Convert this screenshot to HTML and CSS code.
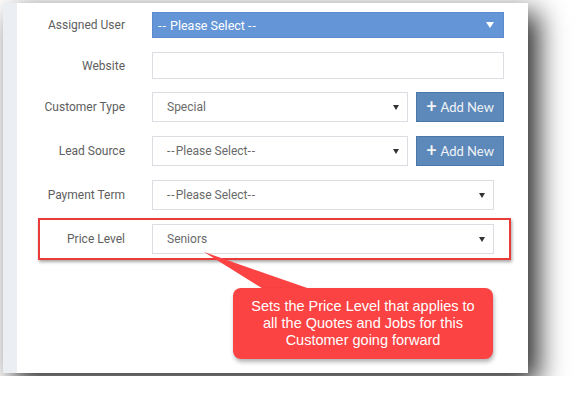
FILE: index.html
```html
<!DOCTYPE html>
<html>
<head>
<meta name="viewport" content="width=device-width, initial-scale=1">
<link rel="stylesheet" href="styles.css">
</head>
<body>

<div class="shot">
  <div class="strip"></div>

  <div class="form">
    <div class="row row-first">
      <span class="lbl">Assigned User</span>
      <div class="sel sel-blue wide"><span class="dash">--</span>&nbsp;Please Select&nbsp;<span class="dash">--</span><span class="caret caret-white"></span></div>
    </div>

    <div class="row row-web">
      <span class="lbl">Website</span>
      <div class="txt wide"></div>
    </div>

    <div class="row">
      <span class="lbl">Customer Type</span>
      <div class="sel short">Special<span class="caret"></span></div>
      <a class="btn" href="#"><span class="plus">+</span>Add New</a>
    </div>

    <div class="row">
      <span class="lbl">Lead Source</span>
      <div class="sel short"><span class="dash">--</span>Please Select<span class="dash">--</span><span class="caret"></span></div>
      <a class="btn" href="#"><span class="plus">+</span>Add New</a>
    </div>

    <div class="row">
      <span class="lbl">Payment Term</span>
      <div class="sel mid"><span class="dash">--</span>Please Select<span class="dash">--</span><span class="caret"></span></div>
    </div>

    <div class="row">
      <span class="lbl">Price Level</span>
      <div class="sel mid">Seniors<span class="caret"></span></div>
      <div class="mark"></div>
    </div>
  </div>

  <svg class="tail" width="525" height="370" viewBox="0 0 525 370">
    <polygon points="201,249 262,287 310,287" fill="#fb4343"/>
  </svg>
  <div class="callout">Sets the Price Level that applies to all the Quotes and Jobs for this Customer going forward</div>
</div>

</body>
</html>
```

FILE: styles.css
```css
html, body {
    margin: 0;
    background: #fff;
}

body {
    padding: 3px;
}

.shot {
    position: relative;
    display: flex;
    width: 525px;
    height: 370px;
    background: #fff;
    box-shadow: 10px 10px 26px rgba(0, 0, 0, 0.85);
}

.strip {
    width: 14px;
    background: #ebeef3;
}

.form {
    flex: 1;
    display: flex;
    flex-direction: column;
    padding-top: 9px;
}

.row {
    position: relative;
    display: flex;
    align-items: center;
    height: 30px;
    margin-bottom: 14px;
}

.row-first {
    height: 26px;
}

.row-web {
    height: 27px;
    margin-bottom: 13px;
}

.lbl {
    width: 108px;
    margin-right: 27px;
    text-align: right;
    font-family: Roboto, "Liberation Sans", sans-serif;
    font-size: 12px;
    color: #5e5e5e;
}

.sel, .txt {
    box-sizing: border-box;
    position: relative;
    height: 100%;
    border: 1px solid #dcdde2;
    background: #fff;
    padding-left: 14px;
    display: flex;
    align-items: center;
    font-family: Roboto, "Liberation Sans", sans-serif;
    font-size: 12px;
    color: #6a6a6a;
    white-space: pre;
}

.dash {
    letter-spacing: 1px;
    margin-right: 0;
}

.wide { width: 352px; }
.short { width: 256px; }
.mid { width: 342px; }

.sel-blue {
    background: #6495d6;
    border-color: #5b8bcc;
    color: #fff;
    padding-left: 5px;
    font-size: 12.5px;
}

.caret {
    position: absolute;
    right: 8px;
    top: 50%;
    margin-top: -2px;
    border-left: 3px solid transparent;
    border-right: 3px solid transparent;
    border-top: 5px solid #333;
}

.caret-white {
    right: 9px;
    margin-top: -3px;
    border-left-width: 4px;
    border-right-width: 4px;
    border-top: 6px solid #fff;
}

.btn {
    box-sizing: border-box;
    height: 100%;
    width: 88px;
    margin-left: 8px;
    display: flex;
    align-items: center;
    justify-content: center;
    background: #5c89ba;
    border: 1px solid #4a77aa;
    color: #f2f4f8;
    text-decoration: none;
    font-family: Lato, "Liberation Sans", sans-serif;
    font-size: 13px;
}

.plus {
    font-size: 18px;
    font-weight: bold;
    margin-right: 4px;
    line-height: 1;
    margin-top: -2px;
}

.mark {
    position: absolute;
    left: 21px;
    top: -6px;
    width: 473px;
    height: 42px;
    box-sizing: border-box;
    border: 2px solid #ea3b3b;
    box-shadow: 1px 2px 3px rgba(0, 0, 0, 0.35);
}

.tail {
    position: absolute;
    left: 0;
    top: 0;
    pointer-events: none;
}

.callout {
    position: absolute;
    left: 230px;
    top: 285px;
    width: 260px;
    height: 71px;
    box-sizing: border-box;
    padding: 10px 16px 0;
    background: #fb4343;
    border-radius: 8px;
    box-shadow: 1px 3px 4px rgba(0, 0, 0, 0.3);
    color: #fff;
    text-align: center;
    font-family: "Liberation Sans", Arial, sans-serif;
    font-size: 14.5px;
    line-height: 17px;
}
```
